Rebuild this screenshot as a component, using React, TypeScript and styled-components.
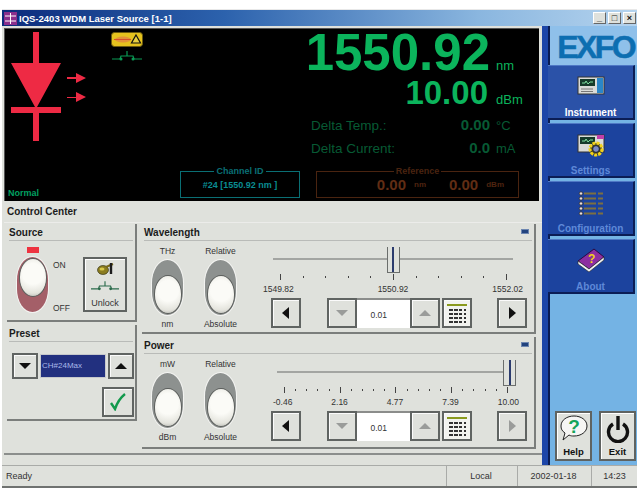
import React from 'react';
import styled, { createGlobalStyle } from 'styled-components';

const GlobalStyle = createGlobalStyle`
  html, body { margin: 0; padding: 0; background: #fff; }
  body { font-family: "Liberation Sans", Arial, sans-serif; font-size: 10px; color: #222; }
  * { box-sizing: border-box; }
`;

const Window = styled.div`
  position: relative;
  width: 635px;
  height: 479px;
  margin: 9px 0 0 2px;
  background: #dfe1dc;
  border-top: 1px solid #e8e8e8;
  border-bottom: 2px solid #6f7270;
  display: flex;
  flex-direction: column;

  &::after {
    content: '';
    position: absolute;
    right: -3px;
    bottom: -11px;
    width: 8px;
    height: 9px;
    background: #8d8d8d;
  }
`;

const TitleBar = styled.div`
  height: 16px;
  flex: none;
  display: flex;
  align-items: center;
  gap: 2px;
  padding: 0 1px 0 2px;
  background: linear-gradient(90deg, #0c2c7c 0%, #2c62ad 35%, #8ab6df 75%, #b4d3ee 100%);
`;

const TitleText = styled.span`
  flex: 1;
  color: #fff;
  font: bold 9.5px "Liberation Sans", sans-serif;
`;

const WinButton = styled.div`
  width: 13px;
  height: 12px;
  background: #dfe1dc;
  border-right: 1px solid #666;
  border-bottom: 1px solid #666;
  border-top: 1px solid #fff;
  border-left: 1px solid #fff;
  display: flex;
  align-items: center;
  justify-content: center;
  color: #111;
  font: bold 9px "Liberation Sans", sans-serif;
  line-height: 1;
`;

const Content = styled.div`
  flex: 1;
  min-height: 0;
  display: flex;
`;

const Main = styled.div`
  width: 540px;
  flex: none;
  display: flex;
  flex-direction: column;
  padding: 2px 0 0 2px;
`;

const Display = styled.div`
  width: 535px;
  height: 173px;
  flex: none;
  background: #000;
  display: flex;
  justify-content: space-between;
  border-left: 1px solid #555;
  border-top: 1px solid #555;
`;

const DisplayLeft = styled.div`
  width: 295px;
  display: flex;
  flex-direction: column;
  justify-content: space-between;
`;

const LaserRow = styled.div`
  display: flex;
  padding: 3px 0 0 6px;
`;

const LaserStatus = styled.div`
  margin-left: 25px;
  display: flex;
  flex-direction: column;
  align-items: center;
  gap: 4px;
`;

const DisplayFoot = styled.div`
  display: flex;
  align-items: flex-end;
  justify-content: space-between;
  padding: 0 0 3px 3px;
`;

const Normal = styled.span`
  color: #00a060;
  font: bold 9px "Liberation Sans", sans-serif;
`;

const Readouts = styled.div`
  width: 228px;
  display: flex;
  flex-direction: column;
  padding-right: 4px;
`;

const ReadRow = styled.div<{ $top: number }>`
  display: flex;
  justify-content: flex-end;
  align-items: baseline;
  margin-top: ${p => p.$top}px;
`;

const BigValue = styled.div<{ $size: number }>`
  flex: none;
  font: bold ${p => p.$size}px/1 "Liberation Sans", sans-serif;
  color: #0bb45c;
`;

const BigUnit = styled.span<{ $width: number; $gap: number }>`
  flex: none;
  width: ${p => p.$width}px;
  color: #0bb45c;
  font: 13px "Liberation Sans", sans-serif;
  padding-left: ${p => p.$gap}px;
`;

const DeltaRow = styled.div<{ $top: number }>`
  display: grid;
  grid-template-columns: 1fr 50px 45px;
  align-items: baseline;
  margin-top: ${p => p.$top}px;
  color: #075a34;
  font: 13.5px "Liberation Sans", sans-serif;
`;

const DeltaValue = styled.span`
  font: bold 15px "Liberation Sans", sans-serif;
  text-align: right;
`;

const DeltaUnit = styled.span`
  padding-left: 6px;
  font-size: 13px;
`;

const Fieldset = styled.div<{ $color: string; $width: number; $end?: boolean }>`
  position: relative;
  width: ${p => p.$width}px;
  height: 27px;
  border: 1px solid ${p => p.$color};
  color: ${p => p.$color};
  display: flex;
  align-items: center;
  justify-content: ${p => (p.$end ? 'flex-end' : 'center')};
  padding-right: ${p => (p.$end ? 14 : 0)}px;
`;

const FieldLegend = styled.span`
  position: absolute;
  top: -7px;
  left: 0;
  right: 0;
  margin: 0 auto;
  width: fit-content;
  padding: 0 2px;
  background: #000;
  font: bold 9px/12px "Liberation Sans", sans-serif;
`;

const ChannelText = styled.span`
  color: #0a8d92;
  font: bold 9px "Liberation Sans", sans-serif;
`;

const RefValue = styled.span`
  color: #612d14;
  font: bold 15px "Liberation Sans", sans-serif;
`;

const RefUnit = styled.span<{ $last?: boolean }>`
  color: #4f2410;
  font: bold 8px "Liberation Sans", sans-serif;
  margin: 0 ${p => (p.$last ? 0 : 23)}px 0 8px;
`;

const RefRow = styled.div`
  display: flex;
  justify-content: flex-end;
  margin: auto 0 3px;
  padding-right: 16px;
`;

const Control = styled.div`
  flex: 1;
  min-height: 0;
  display: flex;
  flex-direction: column;
`;

const ControlTitle = styled.div`
  height: 22px;
  flex: none;
  padding: 5px 0 0 3px;
  font: bold 10px "Liberation Sans", sans-serif;
  border-bottom: 1px solid #ececea;
  color: #1b1b1b;
`;

const Columns = styled.div`
  display: flex;
  gap: 5px;
  padding: 1px 0 0 3px;
  height: 227px;
  flex: none;
`;

const LeftColumn = styled.div`
  width: 130px;
  display: flex;
  flex-direction: column;
  gap: 3px;
`;

const RightColumn = styled.div`
  width: 394px;
  display: flex;
  flex-direction: column;
  gap: 3px;
`;

const Group = styled.div<{ $height: number }>`
  height: ${p => p.$height}px;
  flex: none;
  border-right: 2px solid #7b7e7c;
  border-bottom: 2px solid #7b7e7c;
  display: flex;
  flex-direction: column;
`;

const GroupHead = styled.div`
  height: 17px;
  flex: none;
  margin: 0 2px;
  padding: 3px 0 0 0;
  display: flex;
  justify-content: space-between;
  font: bold 10px "Liberation Sans", sans-serif;
  color: #1b1b1b;
  border-bottom: 1px solid #b9bbb8;
`;

const MiniFlag = styled.span`
  width: 8px;
  height: 5px;
  margin: 2px 3px 0 0;
  background: #22437e;
  border: 1px solid #6d86b0;
`;

const SourceBody = styled.div`
  flex: 1;
  display: flex;
  padding: 6px 8px 0 10px;
`;

const SourceToggle = styled.div`
  display: flex;
  flex-direction: column;
  align-items: center;
  gap: 4px;
`;

const Led = styled.span`
  width: 12px;
  height: 6px;
  background: #ee3340;
`;

const Oval = styled.div<{ $tone: string; $knob: 'top' | 'bottom' }>`
  position: relative;
  width: 31px;
  height: 55px;
  border-radius: 16px / 24px;
  background: ${p => p.$tone};
  box-shadow: 0 0 0 1px #f4f4f2;
  display: flex;
  justify-content: center;
  align-items: ${p => (p.$knob === 'top' ? 'flex-start' : 'flex-end')};
  padding: 1px;
`;

const Knob = styled.div`
  width: 28px;
  height: 39px;
  border-radius: 14px / 19px;
  background: radial-gradient(circle at 50% 40%, #fbfbf7 40%, #e4e4dd 75%, #a9aba6 100%);
  border: 1px solid #5c5f5d;
`;

const OnOff = styled.div`
  height: 58px;
  margin: 8px 0 0 5px;
  padding-top: 5px;
  display: flex;
  flex-direction: column;
  justify-content: space-between;
  font: 8.5px "Liberation Sans", sans-serif;
  color: #333;
`;

const UnlockButton = styled.div`
  margin: 10px 0 0 auto;
  width: 44px;
  height: 55px;
  border: 2px solid #606462;
  box-shadow: inset 1px 1px #fff;
  display: flex;
  flex-direction: column;
  align-items: center;
  justify-content: space-between;
  padding: 3px 0 2px;
  font: 9px "Liberation Sans", sans-serif;
  color: #333;
`;

const PresetBody = styled.div`
  flex: 1;
  display: flex;
  flex-direction: column;
  padding: 11px 1px 0 5px;
  gap: 8px;
`;

const PresetRow = styled.div`
  display: flex;
  gap: 2px;
  justify-content: space-between;
`;

const PresetInput = styled.div`
  flex: 1;
  height: 24px;
  margin-top: 1px;
  background: #22307f;
  border: 1px solid #c6c8cb;
  color: #a9b8e9;
  font: 8px/22px "Liberation Sans", sans-serif;
  padding-left: 1px;
`;

const SquareButton = styled.div<{ $w?: number; $h?: number }>`
  width: ${p => p.$w ?? 30}px;
  height: ${p => p.$h ?? 30}px;
  flex: none;
  background: #dfe1dc;
  border: 2px solid #606462;
  box-shadow: inset 1px 1px #fbfbfb;
  display: flex;
  align-items: center;
  justify-content: center;
`;

const CheckRow = styled.div`
  display: flex;
  justify-content: flex-end;
`;

const PanelBody = styled.div`
  flex: 1;
  display: flex;
  margin-left: -1px;
`;

const ToggleColumn = styled.div`
  width: 53px;
  flex: none;
  display: flex;
  flex-direction: column;
  align-items: center;
  padding-top: 5px;
  font: 8.5px "Liberation Sans", sans-serif;
  color: #333;
  gap: 4px;
`;

const SliderColumn = styled.div`
  width: 264px;
  margin-left: 16px;
  display: flex;
  flex-direction: column;
`;

const TrackBox = styled.div<{ $left: number; $right: number }>`
  position: relative;
  height: 26px;
  margin: 6px ${p => p.$right}px 0 ${p => p.$left}px;
`;

const TrackLine = styled.div`
  position: absolute;
  left: 0;
  right: 0;
  top: 11px;
  height: 2px;
  background: #a3a5a2;
`;

const Thumb = styled.div`
  position: absolute;
  top: 0;
  width: 13px;
  height: 26px;
  margin-left: -7px;
  background: #dfe1dc;
  border: 1px solid #6b6e6c;
  border-top: none;
  display: flex;
  justify-content: center;

  &::before {
    content: '';
    width: 2px;
    height: 100%;
    background: #2c3c6e;
  }
`;

const Ticks = styled.div<{ $left: number; $right: number }>`
  height: 7px;
  margin: 0 ${p => p.$right}px 0 ${p => p.$left}px;
  display: flex;
  justify-content: space-between;
  align-items: center;
`;

const Tick = styled.span<{ $major: boolean }>`
  width: 1px;
  height: ${p => (p.$major ? 6 : 2)}px;
  background: #444;
`;

const Scale = styled.div<{ $left: number; $right: number }>`
  margin: 3px ${p => p.$right}px 0 ${p => p.$left}px;
  display: flex;
  justify-content: space-between;
  font: 8.5px/12px "Liberation Sans", sans-serif;
  color: #333;
`;

const ButtonRow = styled.div`
  margin: 3px 0 0 8px;
  display: flex;
  justify-content: space-between;
`;

const Spinner = styled.div`
  display: flex;
`;

const StepValue = styled.div`
  width: 53px;
  height: 30px;
  background: #fff;
  font: 8.5px/30px "Liberation Sans", sans-serif;
  padding-left: 14px;
  color: #333;
  border-top: 2px solid #8b8d8b;
`;

const KeypadButton = styled(SquareButton)`
  margin-left: 2px;
  background: #f2f3ef;
`;

const Rule = styled.div`
  margin-top: 3px;
  border-top: 2px solid #8b8e8c;
  flex: none;
`;

const Side = styled.div`
  flex: 1;
  display: flex;
  min-width: 0;
`;

const Strip = styled.div`
  width: 8px;
  flex: none;
  background: #1d46a8;
  border-right: 2px solid #0a1c52;
`;

const SidePanel = styled.div`
  flex: 1;
  background: #74b3e4;
  display: flex;
  flex-direction: column;
`;

const Logo = styled.div`
  height: 39px;
  flex: none;
  padding: 3px 3px 0 0;
  text-align: right;
  color: #0d6eb1;
  font: bold 32px/36px "Liberation Sans", sans-serif;
  letter-spacing: -2.6px;
  -webkit-text-stroke: 0.5px #0d6eb1;
  background: #8fc0ea;
`;

const Tabs = styled.div`
  margin-left: -2px;
  display: flex;
  flex-direction: column;
  gap: 3px;
  flex: none;
`;

const Tab = styled.div<{ $active?: boolean }>`
  height: 55px;
  width: 87px;
  background: ${p => (p.$active ? '#2b52a8' : '#1c439e')};
  border-right: 2px solid #0b1d55;
  border-bottom: 2px solid #0b1d55;
  border-top: 1px solid #4f78c5;
  color: ${p => (p.$active ? '#fff' : '#5f89d8')};
  font: bold 10px "Liberation Sans", sans-serif;
  display: flex;
  flex-direction: column;
  align-items: center;
  justify-content: space-between;
  padding: 8px 0 0;
`;

const SideActions = styled.div`
  margin-top: auto;
  padding: 0 1px 4px 5px;
  display: flex;
  justify-content: space-between;
`;

const ActionButton = styled.div`
  width: 37px;
  height: 50px;
  background: #dfe1dc;
  border: 2px solid #5f6361;
  box-shadow: inset 1px 1px #fff;
  display: flex;
  flex-direction: column;
  align-items: center;
  justify-content: space-between;
  padding: 2px 0 2px;
  font: bold 9.5px "Liberation Sans", sans-serif;
  color: #111;
`;

const StatusBar = styled.div`
  height: 21px;
  flex: none;
  display: flex;
  border-top: 1px solid #a9aba8;
  font: 9px/20px "Liberation Sans", sans-serif;
  color: #333;
`;

const StatusCell = styled.div<{ $width?: number; $center?: boolean }>`
  ${p => (p.$width ? `width: ${p.$width}px; flex: none;` : 'flex: 1;')}
  padding-left: ${p => (p.$center ? 0 : 4)}px;
  text-align: ${p => (p.$center ? 'center' : 'left')};
  margin-left: ${p => (p.$center ? 2 : 0)}px;
  border-left: ${p => (p.$center ? '1px solid #a9aba8' : 'none')};
`;

const Diode = () => (
  <svg width="50" height="109" viewBox="0 0 50 109">
    <path d="M22 0h6v31h22L26 75h24v6H28v28h-6V81H0v-6h24L0 31h22z" fill="#ee2a44" />
  </svg>
);

const LightArrows = () => (
  <svg width="19" height="32" viewBox="0 0 19 32" style={{ marginLeft: 6, marginTop: 41 }}>
    <path d="M0 4h9V0l10 5-10 5V6H0zM0 24h9v-5l10 5-10 5v-4H0z" fill="#ee2a44" />
  </svg>
);

const LaserBadge = () => (
  <svg width="32" height="15" viewBox="0 0 32 15">
    <rect x="0.5" y="0.5" width="31" height="14" rx="3" fill="#e5c21e" stroke="#6b5a10" />
    <ellipse cx="12" cy="7.5" rx="8" ry="3" fill="#e2923a" />
    <path d="M3 7.5h17" stroke="#d8502a" />
    <path d="M25 3l4.5 8h-9z" fill="#e8d040" stroke="#111" strokeWidth="1.2" />
  </svg>
);

const SwitchIcon = ({ color, width = 30 }: { color: string; width?: number }) => (
  <svg width={width} height="11" viewBox="0 0 30 11">
    <path d="M0 8h8l1-3h12l1 3h8M15 5V0" fill="none" stroke={color} strokeWidth="1.2" />
    <circle cx="9" cy="8" r="1.5" fill={color} />
    <circle cx="21" cy="8" r="1.5" fill={color} />
  </svg>
);

const Triangle = ({ dir, off }: { dir: 'up' | 'down' | 'left' | 'right'; off?: boolean }) => {
  const shapes = {
    up: '1,10 7,4 13,10',
    down: '1,4 13,4 7,10',
    left: '10,1 10,13 3,7',
    right: '4,1 4,13 11,7',
  };
  return (
    <svg width="14" height="14" viewBox="0 0 14 14">
      <polygon points={shapes[dir]} fill={off ? '#9a9c9a' : '#111'} />
    </svg>
  );
};

const KeypadIcon = () => (
  <svg width="22" height="22" viewBox="0 0 22 22">
    <rect x="1" y="2" width="20" height="2" fill="#8a9a1e" />
    {[8, 12, 16, 20].map(y => (
      <path key={y} d="M3 0h4M8 0h4M13 0h3M18 0h2" transform={`translate(0 ${y})`} stroke="#333" strokeWidth="2" />
    ))}
  </svg>
);

const KeyIcon = () => (
  <svg width="17" height="13" viewBox="0 0 17 13">
    <ellipse cx="6" cy="8" rx="5.5" ry="4.5" fill="#8a7c20" stroke="#2a2a10" strokeWidth="0.6" />
    <ellipse cx="5" cy="7" rx="2.5" ry="1.6" fill="#d8c84a" />
    <path d="M9 5l7-3" stroke="#7a6a1a" strokeWidth="2" />
    <path d="M14 1v11" stroke="#1c1c1c" strokeWidth="2.4" />
  </svg>
);

const InstrumentIcon = ({ gear }: { gear?: boolean }) => (
  <svg width="28" height="26" viewBox="0 0 28 26">
    <rect x="1" y="3" width="26" height="17" fill="#d9dbd8" stroke="#333" />
    <rect x="3" y="5" width="15" height="7" fill="#163a2a" />
    <path d="M5 9h3l1-2 2 3 2-2h3" stroke="#7fe0a0" fill="none" />
    {gear ? (
      <>
        <rect x="20" y="3" width="7" height="4" fill="#c13fa8" />
        <circle cx="19" cy="17" r="6" fill="#3a3a20" stroke="#f2d21a" strokeWidth="3" strokeDasharray="3 1" />
        <circle cx="19" cy="17" r="3.4" fill="#7a8ac8" stroke="#222" />
      </>
    ) : (
      <>
        <rect x="20" y="4" width="6" height="15" fill="#2a86c8" />
        <path d="M4 15h12M4 17.5h12" stroke="#777" />
      </>
    )}
  </svg>
);

const ConfigIcon = () => (
  <svg width="28" height="26" viewBox="0 0 28 26">
    {[4, 9, 14, 19, 24].map(y => (
      <g key={y}>
        <circle cx="4" cy={y - 0.5} r="1.7" fill="#e8dcdc" stroke="#222" strokeWidth="0.7" />
        <path d={`M7 ${y - 0.5}h12M21 ${y - 0.5}h5`} stroke="#7d7040" strokeWidth="1.8" />
      </g>
    ))}
  </svg>
);

const BookIcon = () => (
  <svg width="28" height="25" viewBox="0 0 28 25">
    <path d="M1 13L17 1l10 8-15 12z" fill="#8c2ea0" stroke="#2a0a40" />
    <path d="M1 13l11 8 15-12v3L12 24 1 16z" fill="#f2f2f2" stroke="#222" strokeWidth="0.6" />
    <text x="11" y="15" fontFamily="Liberation Sans" fontSize="12" fontWeight="bold" fill="#f2d21a">?</text>
  </svg>
);

const HelpIcon = () => (
  <svg width="28" height="27" viewBox="0 0 28 27">
    <path d="M14 1c7 0 13 4 13 10s-6 10-13 10c-2 0-3 0-5-1l-6 5 2-7C2 16 1 14 1 11 1 5 7 1 14 1z" fill="#f6f6f4" stroke="#222" />
    <text x="14" y="18" textAnchor="middle" fontFamily="Liberation Sans" fontSize="19" fontWeight="bold" fill="#13a45a">?</text>
  </svg>
);

const PowerIcon = () => (
  <svg width="24" height="28" viewBox="0 0 24 28">
    <path d="M7 9a9.5 9.5 0 1 0 10 0" fill="none" stroke="#111" strokeWidth="3.4" />
    <path d="M12 1v14" stroke="#111" strokeWidth="3.4" />
  </svg>
);

const CheckMark = () => (
  <svg width="16" height="18" viewBox="0 0 16 18">
    <path d="M1 10l4 6C7 10 10 5 15 1" fill="none" stroke="#12994c" strokeWidth="2.4" />
  </svg>
);

type SliderProps = {
  ticks: number;
  pos: number;
  track: [number, number];
  tickInset: [number, number];
  scale: string[];
  scaleInset: [number, number];
  rightOff?: boolean;
};

const Slider = ({ ticks, pos, track, tickInset, scale, scaleInset, rightOff }: SliderProps) => (
  <SliderColumn>
    <TrackBox $left={track[0]} $right={track[1]}>
      <TrackLine />
      <Thumb style={{ left: `${pos * 100}%` }} />
    </TrackBox>
    <Ticks $left={tickInset[0]} $right={tickInset[1]}>
      {Array.from({ length: ticks }, (_, i) => (
        <Tick key={i} $major={i % 5 === 0} />
      ))}
    </Ticks>
    <Scale $left={scaleInset[0]} $right={scaleInset[1]}>
      {scale.map(s => (
        <span key={s}>{s}</span>
      ))}
    </Scale>
    <ButtonRow>
      <SquareButton><Triangle dir="left" /></SquareButton>
      <Spinner>
        <SquareButton><Triangle dir="down" off /></SquareButton>
        <StepValue>0.01</StepValue>
        <SquareButton><Triangle dir="up" off /></SquareButton>
        <KeypadButton><KeypadIcon /></KeypadButton>
      </Spinner>
      <SquareButton><Triangle dir="right" off={rightOff} /></SquareButton>
    </ButtonRow>
  </SliderColumn>
);

const ToggleGroup = ({ top, bottom }: { top: string; bottom: string }) => (
  <ToggleColumn>
    <span>{top}</span>
    <Oval $tone="#8d918f" $knob="bottom"><Knob /></Oval>
    <span>{bottom}</span>
  </ToggleColumn>
);

const App: React.FC = () => (
  <>
    <GlobalStyle />
    <Window>
      <TitleBar>
        <svg width="13" height="13" viewBox="0 0 13 13">
          <rect width="13" height="13" fill="#8a2f8c" />
          <path d="M1 4h11M1 9h11M6.5 1v11" stroke="#fff" />
        </svg>
        <TitleText>IQS-2403 WDM Laser Source [1-1]</TitleText>
        <WinButton>_</WinButton>
        <WinButton>□</WinButton>
        <WinButton>×</WinButton>
      </TitleBar>
      <Content>
        <Main>
          <Display>
            <DisplayLeft>
              <LaserRow>
                <Diode />
                <LightArrows />
                <LaserStatus>
                  <LaserBadge />
                  <SwitchIcon color="#0a9a55" />
                </LaserStatus>
              </LaserRow>
              <DisplayFoot>
                <Normal>Normal</Normal>
                <Fieldset $color="#0a6f74" $width={120}>
                  <FieldLegend>Channel ID</FieldLegend>
                  <ChannelText>#24 [1550.92 nm ]</ChannelText>
                </Fieldset>
              </DisplayFoot>
            </DisplayLeft>
            <Readouts>
              <ReadRow $top={-2}>
                <BigValue $size={51}>1550.92</BigValue>
                <BigUnit $width={45} $gap={6}>nm</BigUnit>
              </ReadRow>
              <ReadRow $top={-2}>
                <BigValue $size={33}>10.00</BigValue>
                <BigUnit $width={47} $gap={8}>dBm</BigUnit>
              </ReadRow>
              <DeltaRow $top={7}>
                <span>Delta Temp.:</span>
                <DeltaValue>0.00</DeltaValue>
                <DeltaUnit>°C</DeltaUnit>
              </DeltaRow>
              <DeltaRow $top={6}>
                <span>Delta Current:</span>
                <DeltaValue>0.0</DeltaValue>
                <DeltaUnit>mA</DeltaUnit>
              </DeltaRow>
              <RefRow>
                <Fieldset $color="#4a2410" $width={203} $end>
                  <FieldLegend>Reference</FieldLegend>
                  <RefValue>0.00</RefValue>
                  <RefUnit>nm</RefUnit>
                  <RefValue>0.00</RefValue>
                  <RefUnit $last>dBm</RefUnit>
                </Fieldset>
              </RefRow>
            </Readouts>
          </Display>
          <Control>
            <ControlTitle>Control Center</ControlTitle>
            <Columns>
              <LeftColumn>
                <Group $height={98}>
                  <GroupHead>Source</GroupHead>
                  <SourceBody>
                    <SourceToggle>
                      <Led />
                      <Oval $tone="#a45f68" $knob="top"><Knob /></Oval>
                    </SourceToggle>
                    <OnOff>
                      <span>ON</span>
                      <span>OFF</span>
                    </OnOff>
                    <UnlockButton>
                      <KeyIcon />
                      <SwitchIcon color="#2a6a4a" width={28} />
                      <span>Unlock</span>
                    </UnlockButton>
                  </SourceBody>
                </Group>
                <Group $height={96}>
                  <GroupHead>Preset</GroupHead>
                  <PresetBody>
                    <PresetRow>
                      <SquareButton $w={26} $h={26}><Triangle dir="down" /></SquareButton>
                      <PresetInput>CH#24Max</PresetInput>
                      <SquareButton $w={26} $h={26}><Triangle dir="up" /></SquareButton>
                    </PresetRow>
                    <CheckRow>
                      <SquareButton $w={32} $h={30}><CheckMark /></SquareButton>
                    </CheckRow>
                  </PresetBody>
                </Group>
              </LeftColumn>
              <RightColumn>
                <Group $height={110}>
                  <GroupHead>Wavelength<MiniFlag /></GroupHead>
                  <PanelBody>
                    <ToggleGroup top="THz" bottom="nm" />
                    <ToggleGroup top="Relative" bottom="Absolute" />
                    <Slider
                      ticks={11}
                      pos={0.504}
                      track={[10, 14]}
                      tickInset={[17, 20]}
                      scale={['1549.82', '1550.92', '1552.02']}
                      scaleInset={[0, 4]}
                    />
                  </PanelBody>
                </Group>
                <Group $height={112}>
                  <GroupHead>Power<MiniFlag /></GroupHead>
                  <PanelBody>
                    <ToggleGroup top="mW" bottom="dBm" />
                    <ToggleGroup top="Relative" bottom="Absolute" />
                    <Slider
                      ticks={21}
                      pos={1}
                      track={[14, 17]}
                      tickInset={[21, 19]}
                      scale={['-0.46', '2.16', '4.77', '7.39', '10.00']}
                      scaleInset={[10, 8]}
                      rightOff
                    />
                  </PanelBody>
                </Group>
              </RightColumn>
            </Columns>
            <Rule />
          </Control>
        </Main>
        <Side>
          <Strip />
          <SidePanel>
            <Logo>EXFO</Logo>
            <Tabs>
              <Tab $active><InstrumentIcon /><span>Instrument</span></Tab>
              <Tab><InstrumentIcon gear /><span>Settings</span></Tab>
              <Tab><ConfigIcon /><span>Configuration</span></Tab>
              <Tab><BookIcon /><span>About</span></Tab>
            </Tabs>
            <SideActions>
              <ActionButton><HelpIcon /><span>Help</span></ActionButton>
              <ActionButton><PowerIcon /><span>Exit</span></ActionButton>
            </SideActions>
          </SidePanel>
        </Side>
      </Content>
      <StatusBar>
        <StatusCell>Ready</StatusCell>
        <StatusCell $width={69} $center>Local</StatusCell>
        <StatusCell $width={72} $center>2002-01-18</StatusCell>
        <StatusCell $width={46} $center>14:23</StatusCell>
      </StatusBar>
    </Window>
  </>
);

export default App;
